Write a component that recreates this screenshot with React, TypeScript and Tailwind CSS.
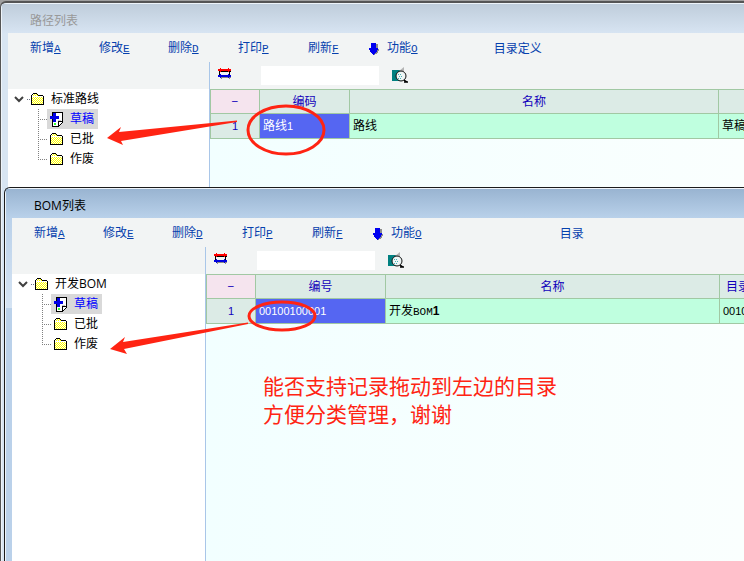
import React, { useState } from "react";
import clsx from "clsx";

type Column = { title: string; width: string };
type Cell = { text: string; latin?: string; strong?: string };
type WindowData = {
  title: string;
  root: string;
  lastAction: string;
  columns: Column[];
  cells: Cell[];
};

const MENU = [
  { label: "新增", hotkey: "A", width: "w-[69px]" },
  { label: "修改", hotkey: "E", width: "w-[69px]" },
  { label: "删除", hotkey: "D", width: "w-[70px]" },
  { label: "打印", hotkey: "P", width: "w-[70px]" },
  { label: "刷新", hotkey: "F", width: "w-[61px]" },
];

const FOLDERS = ["草稿", "已批", "作废"];

const ROUTES: WindowData = {
  title: "路径列表",
  root: "标准路线",
  lastAction: "目录定义",
  columns: [
    { title: "编码", width: "w-[90px]" },
    { title: "名称", width: "" },
    { title: "", width: "w-[26px]" },
  ],
  cells: [{ text: "路线", latin: "1" }, { text: "路线" }, { text: "草稿" }],
};

const BOMS: WindowData = {
  title: "BOM列表",
  root: "开发BOM",
  lastAction: "目录",
  columns: [
    { title: "编号", width: "w-[130px]" },
    { title: "名称", width: "" },
    { title: "目录", width: "w-[25px]" },
  ],
  cells: [
    { text: "", latin: "00100100001" },
    { text: "开发", latin: "BOM", strong: "1" },
    { text: "", latin: "00100" },
  ],
};

function FolderIcon() {
  return (
    <svg className="block h-[14px] w-[13px] shrink-0" viewBox="0 0 13 14" shapeRendering="crispEdges" aria-hidden="true">
      <defs>
        <pattern id="dither" width="2" height="2" patternUnits="userSpaceOnUse">
          <rect width="2" height="2" fill="#ffff00" />
          <rect width="1" height="1" fill="#fffff0" />
          <rect x="1" y="1" width="1" height="1" fill="#fffff0" />
        </pattern>
      </defs>
      <path d="M0 3h1V2h1V1h4v1h1v1h5v1h1v9H0z" fill="#000" />
      <path d="M1 4V3h1V2h4v1h1v1h5v8H1z" fill="url(#dither)" />
      <path d="M1 4h11v1H1z" fill="#fff" />
    </svg>
  );
}

function DraftIcon() {
  return (
    <svg className="block h-[16px] w-[13px] shrink-0" viewBox="0 0 13 16" shapeRendering="crispEdges" aria-hidden="true">
      <path d="M2 1h11v10l-4 5H2z" fill="#000" />
      <path d="M3 2h9v8H8v5H3z" fill="#fff" />
      <path d="M9 11h3l-3 4z" fill="#fff" />
      <path d="M8 9h3v1H8z" fill="#c8c8c8" />
      <path d="M3 2h3v3h3v3H6v3H3V8H0V5h3z" fill="#0000e6" />
      <path d="M4 12h2v2H4z" fill="#33ff33" />
    </svg>
  );
}

function SwapIcon() {
  return (
    <svg className="block h-[12px] w-[14px]" viewBox="0 0 14 12" shapeRendering="crispEdges" aria-hidden="true">
      <path d="M1 3h12v1H1zM1 4h1v3H1zM11 4h1v3h-1z" fill="#000" />
      <path d="M2 9h11v1H2zM3 10h1v1H3zM11 10h1v1h-1z" fill="#8a8a8a" />
      <path d="M0 1h2V0h1v1h7V0h1v1h2v2h-2v1h-1V3H3v1H2V3H0z" fill="#ff0000" />
      <path d="M0 7h2V6h1v1h7V6h1v1h2v2h-2v1h-1V9H3v1H2V9H0z" fill="#0000dd" />
    </svg>
  );
}

function LookupIcon() {
  return (
    <svg className="block h-[16px] w-[17px]" viewBox="0 0 17 16" aria-hidden="true">
      <path d="M0 3h10v11H0z" fill="#008080" />
      <path d="M7 4l5-4v4z" fill="#b4b4b4" />
      <circle cx="9" cy="9" r="5" fill="#eef5f5" stroke="#111" />
      <path d="M6 7h1v1H6zM8 7h1v1H8zM7 9h1v1H7zM9 9h1v1H9zM6 11h1v1H6zM8 11h1v1H8z" fill="#45b5b5" />
      <path d="M12 13l3 2M12 15h4" stroke="#000" strokeWidth="1.5" />
    </svg>
  );
}

function DownIcon() {
  return (
    <svg className="block h-[12px] w-[11px]" viewBox="0 0 11 12" shapeRendering="crispEdges" aria-hidden="true">
      <path d="M4 1h5v5h1v2H9v2H8v1H6v1H5V9z" fill="#8c8c8c" />
      <path d="M2 0h5v5h2v2H8v2H7v1H6v1H5v1H4v-1H3v-1H2V9H1V7H0V5h2z" fill="#0000f0" />
    </svg>
  );
}

function Branch({ last }: { last: boolean }) {
  return (
    <svg className="block h-5 w-[9px] shrink-0" viewBox="0 0 9 20" shapeRendering="crispEdges" aria-hidden="true">
      <path d={last ? "M.5 0V11" : "M.5 0V20"} stroke="#808080" strokeDasharray="1 1" />
      <path d="M0 10.5H9" stroke="#808080" strokeDasharray="1 1" />
    </svg>
  );
}

function Tree({ root }: { root: string }) {
  const [selected, setSelected] = useState("草稿");
  return (
    <ul className="flex-1 bg-white text-[12px] leading-5 text-black">
      <li>
        <button type="button" className="flex h-5 items-center whitespace-nowrap pl-[6px]">
          <svg className="block h-[7px] w-[10px]" viewBox="0 0 10 7" fill="none" aria-hidden="true">
            <path d="M1 1l4 4 4-4" stroke="#404040" strokeWidth="2" />
          </svg>
          <span className="ml-[3px] mr-px w-[3px] border-t border-dotted border-gray-500" />
          <FolderIcon />
          <span className="ml-[7px]">{root}</span>
        </button>
        <ul>
          {FOLDERS.map((name, i) => (
            <li key={name} className="flex h-5 pl-[30px]">
              <Branch last={i === FOLDERS.length - 1} />
              <button
                type="button"
                onClick={() => setSelected(name)}
                className={clsx(
                  "flex h-5 w-[51px] items-center gap-[7px] whitespace-nowrap pl-[3px]",
                  selected === name && "bg-[#d9d9d9] text-[#0000ff]"
                )}
              >
                {i === 0 ? <DraftIcon /> : <FolderIcon />}
                <span>{name}</span>
              </button>
            </li>
          ))}
        </ul>
      </li>
    </ul>
  );
}

function Hotkey({ name }: { name: string }) {
  return <span className="font-['Liberation_Mono',monospace] text-[11px] underline">{name}</span>;
}

function Toolbar({ lastAction, wide }: { lastAction: string; wide: boolean }) {
  return (
    <div className="flex h-[29px] items-center whitespace-nowrap pl-[22px] pt-[2px] text-[12px] leading-4 text-[#0540ad]">
      {MENU.map((item) => (
        <button key={item.label} type="button" className={clsx("shrink-0 text-left", item.width)}>
          {item.label}
          <Hotkey name={item.hotkey} />
        </button>
      ))}
      <button type="button" className="flex items-center gap-[7px]">
        <DownIcon />
        <span>
          功能
          <Hotkey name="O" />
        </span>
      </button>
      <button type="button" className={wide ? "ml-[138px]" : "ml-[76px]"}>
        {lastAction}
      </button>
    </div>
  );
}

function Grid({ columns, cells }: { columns: Column[]; cells: Cell[] }) {
  return (
    <table className="w-full table-fixed border-separate border-spacing-0 border-t border-[#a1c8a3] text-[12px] leading-4">
      <thead>
        <tr className="text-[#1100bb]">
          <th className="h-6 w-[49px] border-b border-l border-[#a1c8a3] bg-[#f5e4ee] p-0 font-normal">−</th>
          {columns.map((col, i) => (
            <th
              key={i}
              className={clsx(
                "h-6 overflow-hidden whitespace-nowrap border-b border-l border-[#a1c8a3] bg-[#dcebe6] p-0 font-normal",
                col.width,
                i === columns.length - 1 && "pl-[6px] text-left"
              )}
            >
              {col.title}
            </th>
          ))}
        </tr>
      </thead>
      <tbody>
        <tr className="text-black">
          <td className="h-[25px] border-b border-l border-[#a1c8a3] bg-[#dcebe6] p-0 text-center font-['Liberation_Sans',sans-serif] text-[11px] text-[#1100bb]">
            1
          </td>
          {cells.map((cell, i) => (
            <td
              key={i}
              className={clsx(
                "h-[25px] overflow-hidden whitespace-nowrap border-b border-l border-[#a1c8a3] p-0 pl-[3px]",
                i === 0 ? "bg-[#5566f2] text-white" : "bg-[#bfffdf]"
              )}
            >
              {cell.text}
              {cell.latin && (
                <span
                  className={clsx(
                    "text-[11px]",
                    cell.strong ? "font-['Liberation_Mono',monospace]" : "font-['Liberation_Sans',sans-serif]"
                  )}
                >
                  {cell.latin}
                </span>
              )}
              {cell.strong && <b className="font-['Liberation_Sans',sans-serif]">{cell.strong}</b>}
            </td>
          ))}
        </tr>
      </tbody>
    </table>
  );
}

function ListWindow({ data, active }: { data: WindowData; active: boolean }) {
  return (
    <section
      className={clsx(
        "flex h-full flex-col overflow-hidden rounded-tl-md border-l",
        active ? "border-t border-[#1c1c1c] bg-[#bad1ea]" : "border-t-2 border-[#555555] bg-[#d8e5f2]"
      )}
    >
      <div className="flex flex-1 flex-col rounded-tl-md border-l border-t border-[#eef4fa]">
        <h2
          className={clsx(
            "h-[29px] bg-linear-to-b pl-[28px] pt-[5px] text-[12px] font-normal leading-6",
            active ? "from-[#99b4d1] to-[#b9d1ea] text-black" : "from-[#bfcddb] to-[#d7e4f2] text-[#999999]"
          )}
        >
          {data.title}
        </h2>
        <div className="flex flex-1">
          <div className={clsx("w-[6px] shrink-0", active && "h-[90px] bg-linear-to-b from-[#bad1ea] to-[#d6e4f3]")} />
          <div className="flex min-w-0 flex-1 flex-col bg-[#f2f4f4]">
            <Toolbar lastAction={data.lastAction} wide={active} />
            <div className="flex flex-1">
              <nav className={clsx("flex shrink-0 flex-col pt-[27px]", active ? "w-[193px]" : "w-[201px]")}>
                <Tree root={data.root} />
              </nav>
              <div className="flex min-w-0 flex-1 flex-col border-l border-[#a9c6e8]">
                <div className="flex h-[27px] items-start pl-2 pt-1">
                  <button type="button" aria-label="切换" className="mt-[2px]">
                    <SwapIcon />
                  </button>
                  <input
                    type="text"
                    aria-label="查找内容"
                    className="ml-[29px] h-[19px] w-[118px] bg-white px-1 text-[12px] outline-none"
                  />
                  <button type="button" aria-label="查找" className="ml-[13px] mt-px">
                    <LookupIcon />
                  </button>
                </div>
                <div className="flex-1 bg-linear-to-r from-[#f2ffff] to-[#fafffe]">
                  <Grid columns={data.columns} cells={data.cells} />
                </div>
              </div>
            </div>
          </div>
        </div>
      </div>
    </section>
  );
}

// red pen marks drawn over both windows
function Marks() {
  return (
    <svg className="pointer-events-none absolute left-0 top-0 h-[561px] w-[744px]" viewBox="0 0 744 561" aria-hidden="true">
      <g fill="none" stroke="#ff2413" strokeWidth="3">
        <ellipse cx="286" cy="130" rx="38" ry="24" />
        <ellipse cx="282" cy="316" rx="33" ry="14" />
      </g>
      <g fill="#ff2413">
        <path d="M107 138L121 127L119 132L237 120.500V122L121 141L123 145Z" />
        <path d="M110 349L125 337L123 342L248 322.500V324L124 349L127 354Z" />
      </g>
    </svg>
  );
}

function App() {
  return (
    <main className="relative min-h-screen overflow-hidden bg-[#a0a0a0] font-['Open_Sans','Noto_Sans_CJK_SC',sans-serif]">
      <div className="absolute inset-x-0 bottom-0 top-px">
        <ListWindow data={ROUTES} active={false} />
      </div>
      <div className="absolute bottom-0 left-1 right-0 top-[187px]">
        <ListWindow data={BOMS} active />
      </div>
      <Marks />
      <p className="absolute left-[263px] top-[372px] text-[21px] leading-7 text-[#ff2413]">
        能否支持记录拖动到左边的目录
        <br />
        方便分类管理，谢谢
      </p>
    </main>
  );
}

export default App;
